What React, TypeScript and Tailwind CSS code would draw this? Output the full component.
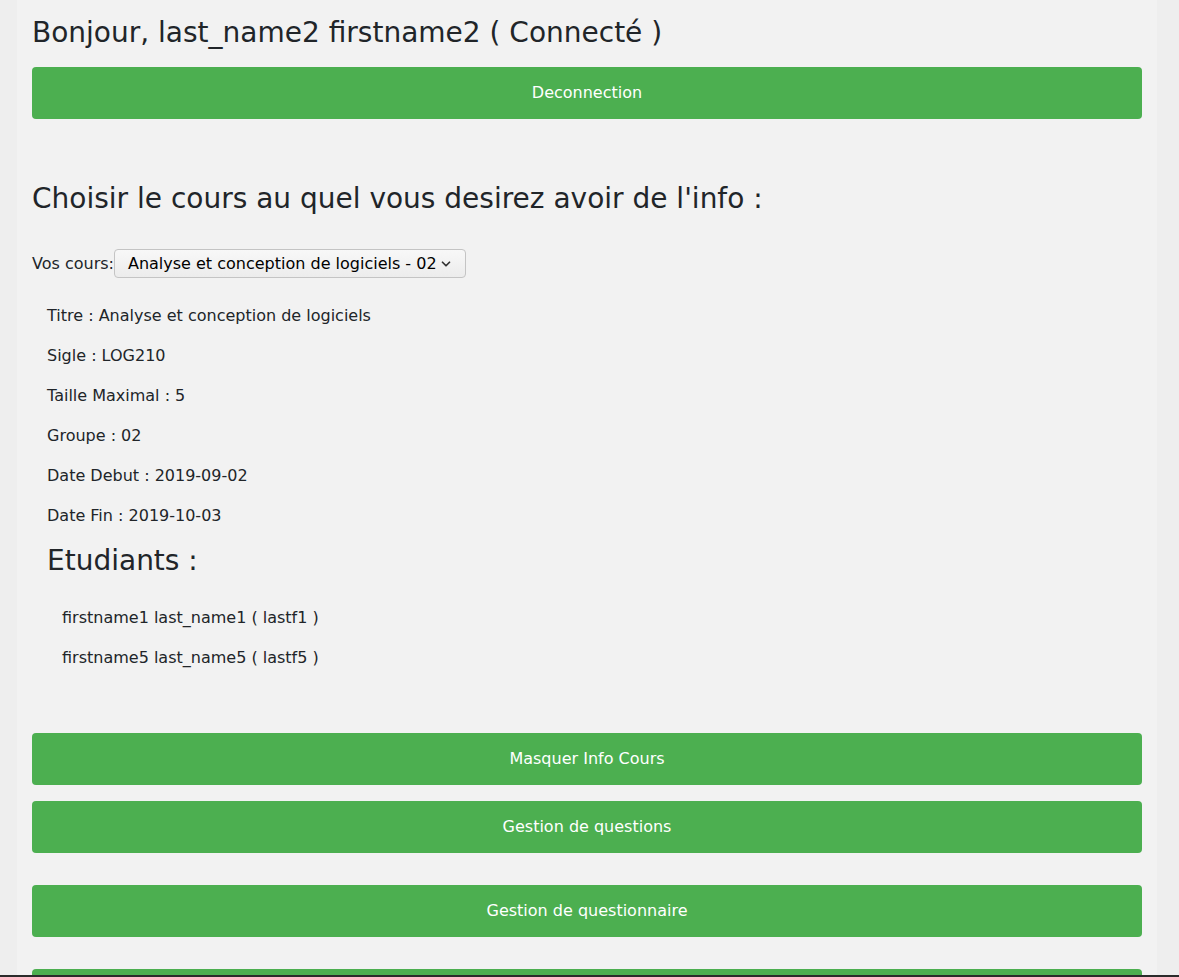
import { ChevronDown } from "lucide-react";

const font = { fontFamily: '"DejaVu Sans", Verdana, sans-serif' };

const infos = [
  "Titre : Analyse et conception de logiciels",
  "Sigle : LOG210",
  "Taille Maximal : 5",
  "Groupe : 02",
  "Date Debut : 2019-09-02",
  "Date Fin : 2019-10-03",
];

const students = ["firstname1 last_name1 ( lastf1 )", "firstname5 last_name5 ( lastf5 )"];

function GreenButton(props: { label: string; className?: string }) {
  return (
    <button
      className={
        "flex h-[52px] w-full shrink-0 items-center justify-center rounded-[4px] bg-[#4caf50] text-[16px] text-white " +
        (props.className ?? "")
      }
    >
      {props.label}
    </button>
  );
}

export default function App() {
  return (
    <div
      className="h-[977px] overflow-hidden border-b-2 border-[#2b2b2b] bg-[#eeeeee] text-[#212529]"
      style={font}
    >
      <div className="ml-[17px] w-[1140px]">
        {/* user panel */}
        <div className="bg-[#f2f2f2] px-[15px] pt-[16px] pb-[44px]">
          <h2 className="mb-[17px] text-[28px] leading-[1.2]">Bonjour, last_name2 firstname2 ( Connecté )</h2>
          <GreenButton label="Deconnection" />
        </div>

        {/* course panel */}
        <div className="bg-[#f2f2f2] px-[15px] pt-[19px] pb-[40px]">
          <h2 className="mb-[34px] text-[28px] leading-[1.2]">Choisir le cours au quel vous desirez avoir de l'info :</h2>

          <div className="flex items-center text-[16px]">
            <span>Vos cours:</span>
            <div className="flex h-[29px] w-[352px] items-center justify-between rounded-[4px] border border-[#c4c4c4] bg-gradient-to-b from-[#f8f8f8] to-[#ececec] pl-[13px] pr-[12px] text-black">
              <span>Analyse et conception de logiciels - 02</span>
              <ChevronDown size={14} strokeWidth={3} className="text-[#333]" />
            </div>
          </div>

          <div className="mt-[26px] pl-[15px] text-[16px] leading-[24px]">
            {infos.map((t) => (
              <p key={t} className="mb-[16px]">
                {t}
              </p>
            ))}
            <h3 className="mb-[28px] text-[28px] leading-[1.2]">Etudiants :</h3>
            <div className="pl-[15px]">
              {students.map((s) => (
                <p key={s} className="mb-[16px]">
                  {s}
                </p>
              ))}
            </div>
          </div>

          <div className="mt-[63px] flex flex-col">
            <GreenButton label="Masquer Info Cours" />
            <GreenButton label="Gestion de questions" className="mt-[16px]" />
            <GreenButton label="Gestion de questionnaire" className="mt-[32px]" />
            <GreenButton label="Gestion de devoirs" className="mt-[32px]" />
          </div>
        </div>
      </div>
    </div>
  );
}
